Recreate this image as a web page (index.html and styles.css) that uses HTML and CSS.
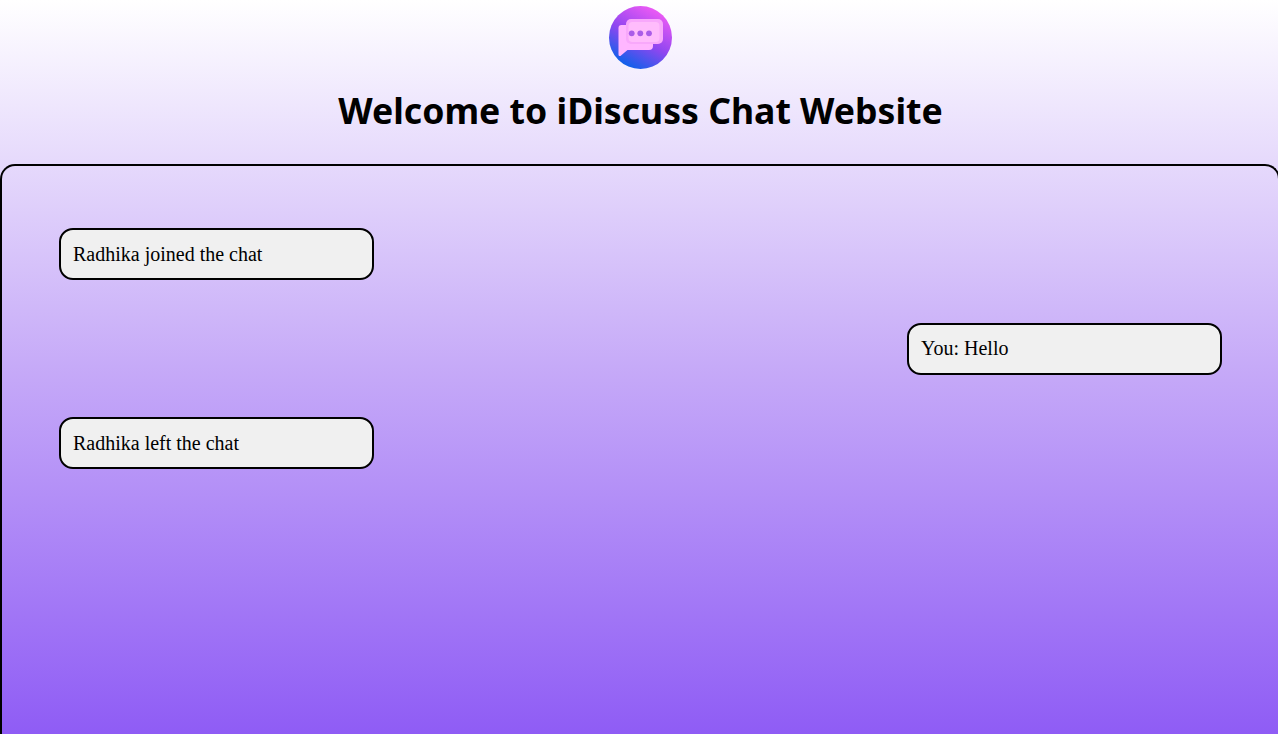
FILE: index.html
```html
<!DOCTYPE html>
<html lang="en">
<head>
<meta charset="utf-8">
<title>iDiscuss Chat</title>
<link rel="stylesheet" href="styles.css">
</head>
<body>
<header class="header">
  <svg class="logo" viewBox="0 0 63 63" width="63" height="63" aria-hidden="true">
    <defs>
      <linearGradient id="disc" x1="0.8" y1="0.05" x2="0.3" y2="0.95">
        <stop offset="0" stop-color="#f25bf5"/>
        <stop offset="0.55" stop-color="#8f46f0"/>
        <stop offset="1" stop-color="#1260ea"/>
      </linearGradient>
    </defs>
    <circle cx="31.5" cy="31.5" r="31.5" fill="url(#disc)"/>
    <path d="M12.500 19h27.500a4 4 0 0 1 4 4v17a4 4 0 0 1-4 4H18.500l-6.500 5.500a1.400 1.400 0 0 1-2.500-1V22a3 3 0 0 1 3-3z" fill="#ffb6ff"/>
    <rect x="17" y="13" width="37" height="25" rx="5" fill="#f8a8fb"/>
    <rect x="19.500" y="16" width="31" height="20" rx="4" fill="#ffbcfc"/>
    <circle cx="22.700" cy="27.300" r="2.900" fill="#aa5ce8"/>
    <circle cx="31.300" cy="27.300" r="2.900" fill="#aa5ce8"/>
    <circle cx="40" cy="27.300" r="2.900" fill="#aa5ce8"/>
  </svg>
  <h1 class="title">Welcome to iDiscuss Chat Website</h1>
</header>
<main class="chat">
  <div class="message left">Radhika joined the chat</div>
  <div class="message right">You: Hello</div>
  <div class="message left">Radhika left the chat</div>
</main>
</body>
</html>
```

FILE: styles.css
```css
html {
  height: 100%;
  overflow: hidden;
}
body {
  margin: 0;
  width: 1280px;
  height: 734px;
  overflow: hidden;
  background: linear-gradient(to bottom, #ffffff 0%, #c6aaf8 50%, #8f5cf5 100%);
  font-family: "Liberation Serif", serif;
  color: #000;
}
.header {
  display: flex;
  flex-direction: column;
  align-items: center;
  padding-top: 6px;
}
.logo {
  display: block;
  margin-left: 1px;
  filter: blur(0.4px);
}
.title {
  margin: 16px 0 29px 1px;
  font: 700 35.6px/50px "Noto Sans", sans-serif;
}
.chat {
  box-sizing: border-box;
  width: 100%;
  height: 570px;
  padding: 62px 56px 0 57px;
  border: 2px solid #000;
  border-bottom: 0;
  border-radius: 15px 15px 0 0;
  display: flex;
  flex-direction: column;
  gap: 42.5px;
}
.message {
  box-sizing: border-box;
  width: 315px;
  height: 52px;
  padding: 0 12px;
  display: flex;
  align-items: center;
  background: #f0f0f0;
  border: 2px solid #000;
  border-radius: 14px;
  font-size: 20px;
}
.left { align-self: flex-start; }
.right { align-self: flex-end; }
```
